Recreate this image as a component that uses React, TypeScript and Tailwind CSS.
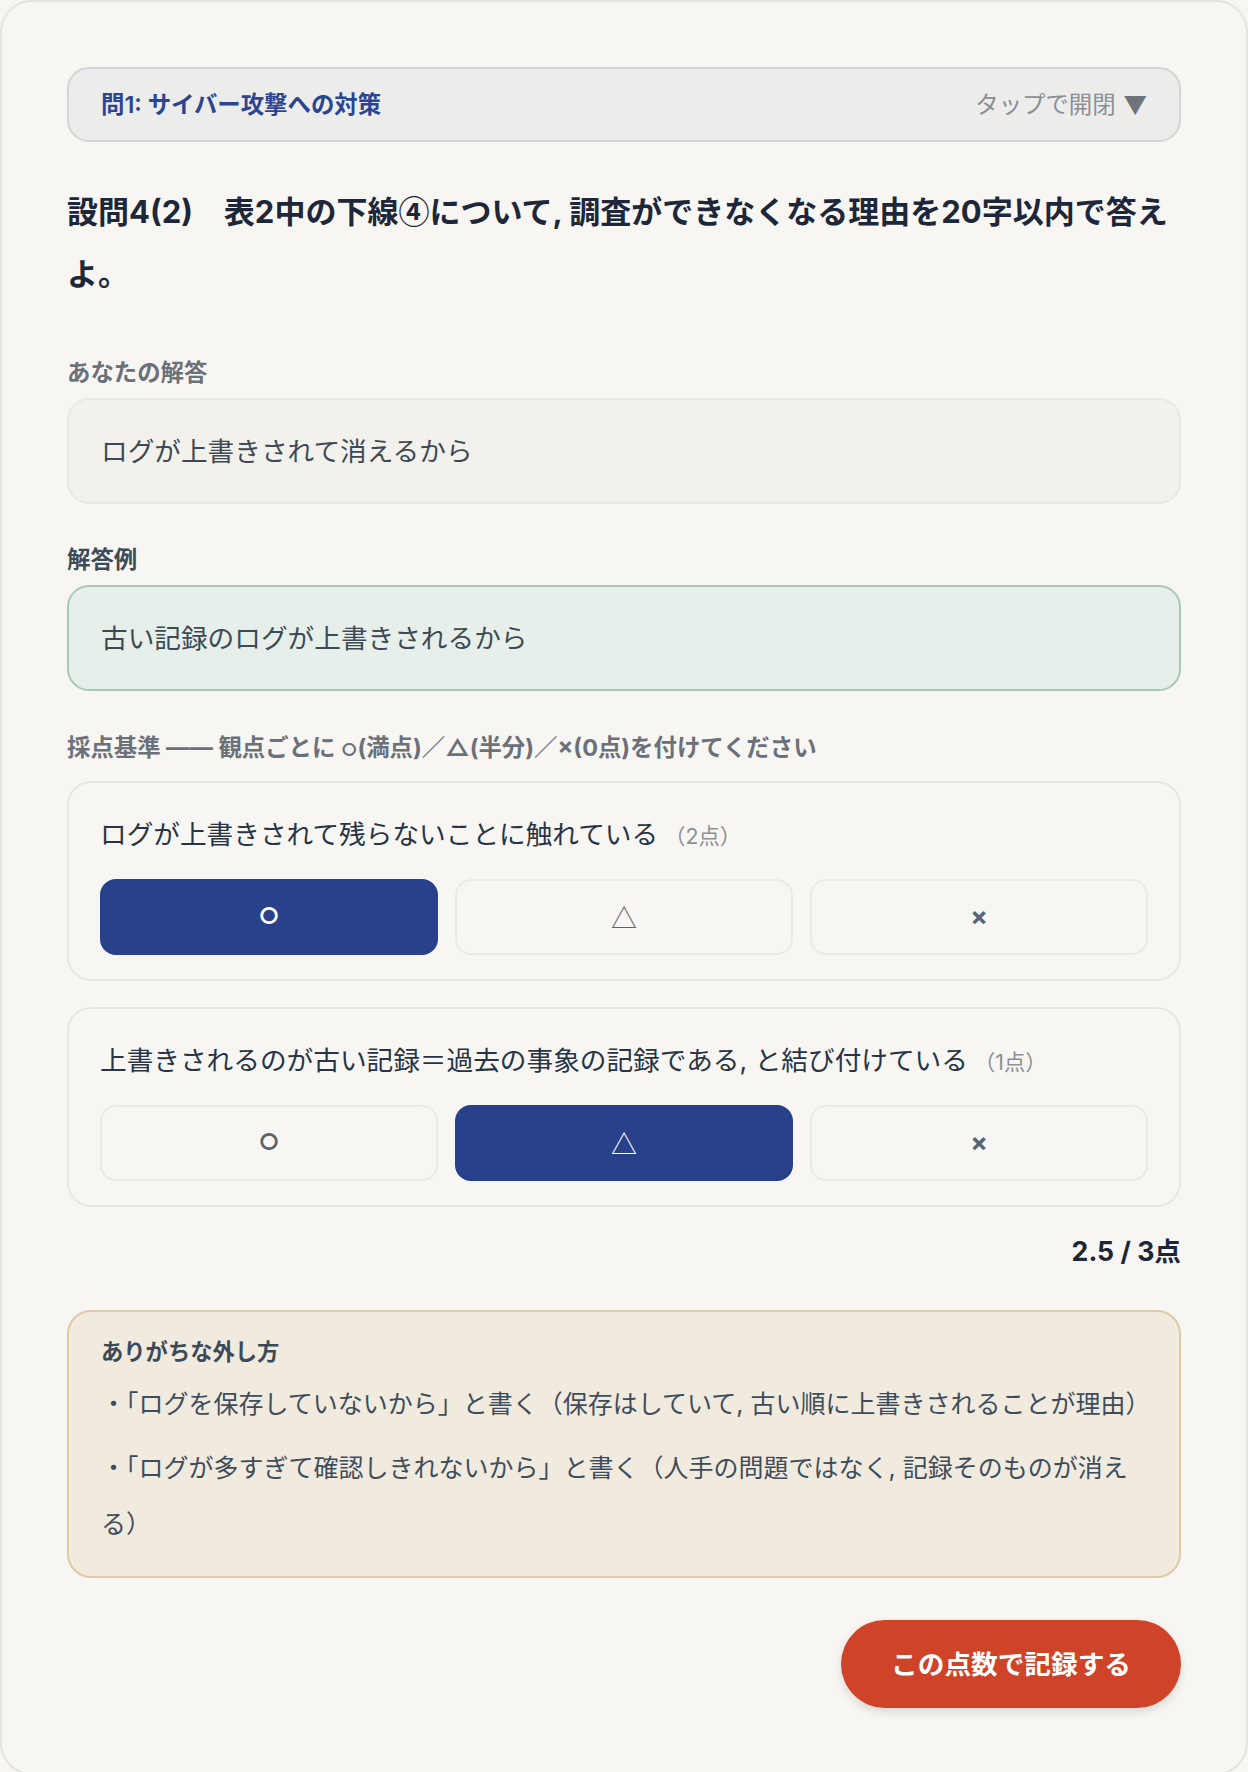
import React from "react";

type Mark = "o" | "t" | "x";

const criteria: { text: string; pts: string; sel: Mark }[] = [
  { text: "ログが上書きされて残らないことに触れている", pts: "（2点）", sel: "o" },
  {
    text: "上書きされるのが古い記録＝過去の事象の記録である, と結び付けている",
    pts: "（1点）",
    sel: "t",
  },
];

function MarkButton({ kind, selected }: { kind: Mark; selected: boolean }) {
  const base =
    "h-[76px] rounded-[16px] flex items-center justify-center border-2 " +
    (selected
      ? "bg-[#28418a] border-[#28418a] text-white"
      : "bg-[#f7f6f2] border-[#ebe9e4] text-[#5d636b]");
  return (
    <div className={base}>
      {kind === "o" && <span className="text-[23px] font-bold leading-none">○</span>}
      {kind === "t" && (
        <span className="text-[26px] font-normal leading-none font-['Noto_Sans_CJK_JP',sans-serif]">△</span>
      )}
      {kind === "x" && <span className="text-[26px] font-bold leading-none">×</span>}
    </div>
  );
}

export default function App() {
  return (
    <div className="w-[1248px] min-h-[1772px] bg-[#f6f6f3] font-['Inter','Noto_Sans_CJK_JP',sans-serif]">
      <div className="min-h-[1772px] rounded-[32px] border-2 border-[#e6e4df] bg-[#f7f6f2] p-[65px] flex flex-col">
        {/* Accordion header */}
        <div className="h-[75px] rounded-[22px] border-2 border-[#d2d4d9] bg-[#ececeb] px-[32px] flex items-center justify-between">
          <span className="text-[23.4px] leading-[35px] font-semibold text-[#2b4593]">
            問1: サイバー攻撃への対策
          </span>
          <span className="flex items-center text-[23.4px] leading-[35px] text-[#8b8e94]">
            タップで開閉
            <span className="ml-[8px] text-[#6f737a] font-['Noto_Sans_CJK_JP',sans-serif]">▼</span>
          </span>
        </div>

        {/* Question */}
        <h1 className="mt-[39px] h-[124.8px] text-[31px] leading-[62.4px] font-bold text-[#1d2739]">
          設問4(2)　表2中の下線<span className="leading-none font-['Noto_Sans_CJK_JP',sans-serif]">④</span>について, 調査ができなくなる理由を20字以内で答えよ。
        </h1>

        {/* Your answer */}
        <div className="mt-[49px] text-[23.4px] leading-[35px] font-bold text-[#6b7079]">
          あなたの解答
        </div>
        <div className="mt-[8px] h-[106px] rounded-[22px] border-2 border-[#e9e8e3] bg-[#f2f1ec] px-[32px] flex items-center">
          <span className="text-[26.67px] leading-[50px] text-[#3d4a56]">ログが上書きされて消えるから</span>
        </div>

        {/* Model answer */}
        <div className="mt-[38px] text-[23.4px] leading-[35px] font-bold text-[#3b4b57]">解答例</div>
        <div className="mt-[8px] h-[106px] rounded-[22px] border-2 border-[#a8c8b9] bg-[#e6efea] px-[32px] flex items-center">
          <span className="text-[26.67px] leading-[50px] text-[#3d4a56]">古い記録のログが上書きされるから</span>
        </div>

        {/* Criteria */}
        <div className="mt-[39px] h-[35px] text-[23.4px] leading-[35px] font-bold text-[#6b7079]">
          採点基準 —— 観点ごとに <span className="text-[18px] leading-none">○</span>(満点)／△(半分)／×(0点)を付けてください
        </div>

        <div className="mt-[16px] flex flex-col gap-[26px]">
          {criteria.map((c, i) => (
            <div
              key={i}
              className="rounded-[24px] border-2 border-[#e8e6e1] bg-[#f7f6f2] px-[31px] pt-[25px] pb-[24px]"
            >
              <div className="h-[52px] text-[26.67px] leading-[52px] text-[#283445]">
                {c.text}
                <span className="ml-[6px] text-[21.3px] leading-none text-[#8d9096]">{c.pts}</span>
              </div>
              <div className="mt-[19px] grid grid-cols-3 gap-[17px]">
                <MarkButton kind="o" selected={c.sel === "o"} />
                <MarkButton kind="t" selected={c.sel === "t"} />
                <MarkButton kind="x" selected={c.sel === "x"} />
              </div>
            </div>
          ))}
        </div>

        {/* Score */}
        <div className="mt-[25px] text-right text-[26.67px] leading-[39px] font-bold text-[#1c2638]">
          2.5 / 3点
        </div>

        {/* Tips */}
        <div className="mt-[39px] rounded-[24px] border-2 border-[#e0c9a5] bg-[#f1eade] px-[32px] pt-[23px] pb-[24px]">
          <div className="text-[22.3px] leading-[33px] font-bold text-[#3b4a58]">ありがちな外し方</div>
          <p className="mt-[8px] text-[25px] leading-[56px] text-[#3e4d5b]">
            ・「ログを保存していないから」と書く（保存はしていて, 古い順に上書きされることが理由）
          </p>
          <p className="mt-[8px] text-[25px] leading-[56px] text-[#3e4d5b]">
            ・「ログが多すぎて確認しきれないから」と書く（人手の問題ではなく, 記録そのものが消える）
          </p>
        </div>

        {/* Submit */}
        <div className="mt-[42px] flex justify-end">
          <button className="h-[88px] px-[50px] rounded-full bg-[#cf4329] text-white text-[26.67px] font-bold shadow-[0_4px_10px_rgba(0,0,0,0.12)]">
            この点数で記録する
          </button>
        </div>
      </div>
    </div>
  );
}
